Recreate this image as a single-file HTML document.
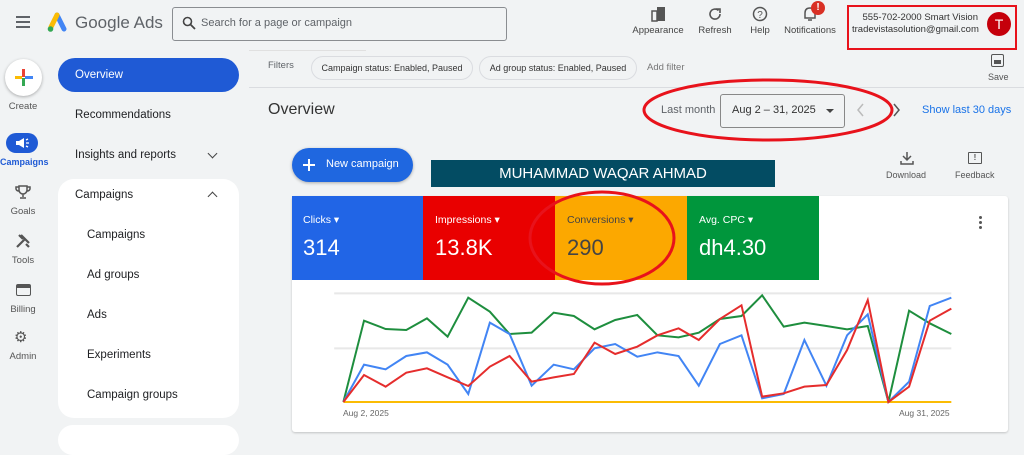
<!DOCTYPE html><html><head><style>
*{margin:0;padding:0;box-sizing:border-box}
body{width:1024px;height:440px;overflow:hidden;background:#f1f3f4;font-family:"Liberation Sans",sans-serif;position:relative;color:#3c4043}
.a{position:absolute}
.nl{font-size:11px;color:#444;text-align:center}
.side{font-size:11.5px;color:#202124}
.ic{font-size:9.5px;color:#555;text-align:center}
</style></head><body>
<!-- header -->
<div class="a" style="left:16px;top:16px;width:14px;height:2px;background:#5f6368;box-shadow:0 5px 0 #5f6368,0 10px 0 #5f6368"></div>
<svg class="a" style="left:46px;top:12px" width="22" height="22" viewBox="0 0 22 22"><path d="M11 3 L18 17" stroke="#4285f4" stroke-width="5" stroke-linecap="round"/><path d="M11 3 L5 15" stroke="#fbbc04" stroke-width="5" stroke-linecap="round"/><circle cx="4.5" cy="17" r="2.8" fill="#34a853"/></svg>
<div class="a" style="left:75px;top:13px;font-size:17px;color:#5f6368">Google Ads</div>
<div class="a" style="left:172px;top:7px;width:335px;height:34px;border:1px solid #8a8d91;border-radius:3px;background:#f1f3f4"></div>
<svg class="a" style="left:182px;top:16px" width="14" height="14" viewBox="0 0 14 14"><circle cx="5.5" cy="5.5" r="4" stroke="#444" stroke-width="1.6" fill="none"/><path d="M8.5 8.5 L13 13" stroke="#444" stroke-width="1.8"/></svg>
<div class="a" style="left:201px;top:17px;font-size:11px;color:#5f6368">Search for a page or campaign</div>
<svg class="a" style="left:651px;top:6px" width="16" height="16"><rect x="1" y="5" width="5" height="10" fill="none" stroke="#555" stroke-width="1.5"/><rect x="6" y="1" width="8" height="14" fill="#555"/></svg>
<div class="a nl" style="left:628px;top:25px;width:60px;font-size:9.5px">Appearance</div>
<svg class="a" style="left:707px;top:6px" width="16" height="16" viewBox="0 0 16 16"><path d="M13 8 A5 5 0 1 1 11.5 4.5" fill="none" stroke="#555" stroke-width="1.6"/><path d="M9 3 L13 3 L13 7" fill="none" stroke="#555" stroke-width="1.6"/></svg>
<div class="a nl" style="left:695px;top:25px;width:40px;font-size:9.5px">Refresh</div>
<svg class="a" style="left:752px;top:6px" width="16" height="16"><circle cx="8" cy="8" r="6.5" fill="none" stroke="#555" stroke-width="1.5"/><text x="8" y="12" font-size="10" text-anchor="middle" fill="#555" font-family="Liberation Sans">?</text></svg>
<div class="a nl" style="left:740px;top:25px;width:40px;font-size:9.5px">Help</div>
<svg class="a" style="left:803px;top:6px" width="14" height="16"><path d="M2 12 L2 7 Q2 2 7 2 Q12 2 12 7 L12 12 Z M5 14 L9 14" fill="none" stroke="#555" stroke-width="1.5"/></svg>
<div class="a" style="left:811px;top:1px;width:14px;height:14px;border-radius:50%;background:#d93025;color:#fff;font-size:10px;font-weight:bold;text-align:center;line-height:14px">!</div>
<div class="a nl" style="left:780px;top:25px;width:60px;font-size:9.5px">Notifications</div>
<div class="a" style="left:847px;top:5px;width:170px;height:45px;border:2px solid #e8121b"></div>
<div class="a" style="left:852px;top:12px;width:126px;text-align:right;font-size:9.5px;color:#333;line-height:12px">555-702-2000 Smart Vision<br>tradevistasolution@gmail.com</div>
<div class="a" style="left:987px;top:12px;width:24px;height:24px;border-radius:50%;background:#c5000b;color:#fff;font-size:14px;text-align:center;line-height:24px">T</div>
<!-- left nav -->
<div class="a" style="left:5px;top:59px;width:37px;height:37px;border-radius:50%;background:#fff;box-shadow:0 1px 3px rgba(0,0,0,.3)"></div>
<div class="a" style="left:22px;top:69px;width:3px;height:8px;background:#ea4335"></div>
<div class="a" style="left:22px;top:78px;width:3px;height:8px;background:#34a853"></div>
<div class="a" style="left:15px;top:76px;width:7px;height:3px;background:#fbbc04"></div>
<div class="a" style="left:25px;top:76px;width:8px;height:3px;background:#4285f4"></div>
<div class="a ic" style="left:0;top:101px;width:46px">Create</div>
<div class="a" style="left:6px;top:133px;width:32px;height:20px;border-radius:10px;background:#1f5ad5"></div>
<svg class="a" style="left:14px;top:136px" width="16" height="14" viewBox="0 0 16 14"><path d="M2 5 H5 L10 2 V12 L5 9 H2 Z" fill="#fff"/><path d="M12 4 L14 3 M12 7 H15 M12 10 L14 11" stroke="#fff" stroke-width="1.3"/></svg>
<div class="a ic" style="left:0;top:157px;width:44px;color:#1f5ad5;font-weight:bold;font-size:9px">Campaigns</div>
<svg class="a" style="left:15px;top:184px" width="16" height="16" viewBox="0 0 16 16"><path d="M4 2 H12 V6 A4 4 0 0 1 4 6 Z M4 3 H1 V5 A3 3 0 0 0 4 7 M12 3 H15 V5 A3 3 0 0 1 12 7 M8 10 V13 M5 14 H11" fill="none" stroke="#555" stroke-width="1.5"/></svg>
<div class="a ic" style="left:0;top:206px;width:46px">Goals</div>
<svg class="a" style="left:15px;top:233px" width="16" height="16" viewBox="0 0 16 16"><path d="M2 14 L10 6 M6 2 L14 10 M4 2 L8 6 M11 11 L14 14" stroke="#555" stroke-width="2.2"/></svg>
<div class="a ic" style="left:0;top:255px;width:46px">Tools</div>
<div class="a" style="left:16px;top:284px;width:15px;height:12px;border:1.5px solid #555;border-top-width:4px;border-radius:2px"></div>
<div class="a ic" style="left:0;top:304px;width:46px">Billing</div>
<div class="a" style="left:14px;top:328px;font-size:15px;color:#555">&#9881;</div>
<div class="a ic" style="left:0;top:351px;width:46px">Admin</div>
<!-- sidebar -->
<div class="a" style="left:58px;top:58px;width:181px;height:34px;border-radius:17px;background:#1f5ad5"></div>
<div class="a side" style="left:75px;top:69px;color:#fff">Overview</div>
<div class="a side" style="left:75px;top:109px">Recommendations</div>
<div class="a side" style="left:75px;top:149px">Insights and reports</div>
<div class="a" style="left:209px;top:150px;width:7px;height:7px;border-right:1.5px solid #444;border-bottom:1.5px solid #444;transform:rotate(45deg)"></div>
<div class="a" style="left:58px;top:179px;width:181px;height:239px;border-radius:16px;background:#fff"></div>
<div class="a side" style="left:75px;top:189px">Campaigns</div>
<div class="a" style="left:209px;top:193px;width:7px;height:7px;border-left:1.5px solid #444;border-top:1.5px solid #444;transform:rotate(45deg)"></div>
<div class="a side" style="left:87px;top:229px">Campaigns</div>
<div class="a side" style="left:87px;top:269px">Ad groups</div>
<div class="a side" style="left:87px;top:309px">Ads</div>
<div class="a side" style="left:87px;top:349px">Experiments</div>
<div class="a side" style="left:87px;top:389px">Campaign groups</div>
<div class="a" style="left:58px;top:425px;width:181px;height:30px;border-radius:16px;background:#fff"></div>
<!-- filters -->
<div class="a" style="left:249px;top:50px;width:117px;height:1px;background:#e0e0e0"></div>
<div class="a" style="left:249px;top:87px;width:775px;height:1px;background:#dadce0"></div>
<div class="a" style="left:268px;top:60px;font-size:9.5px;color:#5f6368">Filters</div>
<div class="a" style="left:311px;top:56px;width:162px;height:24px;border:1px solid #dadce0;border-radius:12px;font-size:9px;line-height:22px;text-align:center;color:#333;white-space:nowrap">Campaign status: Enabled, Paused</div>
<div class="a" style="left:479px;top:56px;width:158px;height:24px;border:1px solid #dadce0;border-radius:12px;font-size:9px;line-height:22px;text-align:center;color:#333;white-space:nowrap">Ad group status: Enabled, Paused</div>
<div class="a" style="left:647px;top:62px;font-size:9.5px;color:#777">Add filter</div>
<div class="a" style="left:991px;top:54px;width:13px;height:13px;border:1.5px solid #555;border-radius:2px"></div>
<div class="a" style="left:994px;top:60px;width:7px;height:4px;background:#555"></div>
<div class="a" style="left:988px;top:72px;font-size:9px;color:#555">Save</div>
<!-- overview heading -->
<div class="a" style="left:268px;top:101px;font-size:16px;color:#333">Overview</div>
<div class="a" style="left:661px;top:104px;font-size:11px;color:#5f6368">Last month</div>
<div class="a" style="left:720px;top:94px;width:125px;height:34px;border:1px solid #888;border-radius:3px"></div>
<div class="a" style="left:732px;top:104px;font-size:11px;color:#333">Aug 2 – 31, 2025</div>
<div class="a" style="left:826px;top:109px;border:4px solid transparent;border-top:4px solid #444"></div>
<svg class="a" style="left:856px;top:103px" width="10" height="14"><path d="M7 1 L2 7 L7 13" fill="none" stroke="#bbb" stroke-width="1.5"/></svg>
<svg class="a" style="left:892px;top:103px" width="10" height="14"><path d="M2 1 L7 7 L2 13" fill="none" stroke="#555" stroke-width="1.5"/></svg>
<div class="a" style="left:922px;top:104px;font-size:11px;color:#1a73e8">Show last 30 days</div>
<svg class="a" style="left:640px;top:76px" width="260" height="68"><ellipse cx="128" cy="34" rx="124" ry="30" fill="none" stroke="#e8121b" stroke-width="3"/></svg>
<!-- new campaign -->
<div class="a" style="left:292px;top:148px;width:121px;height:34px;border-radius:17px;background:#1f67e0;box-shadow:0 1px 3px rgba(0,0,0,.3)"></div>
<div class="a" style="left:303px;top:164px;width:12px;height:2px;background:#fff"></div>
<div class="a" style="left:308px;top:159px;width:2px;height:12px;background:#fff"></div>
<div class="a" style="left:326px;top:158px;font-size:11px;color:#fff">New campaign</div>
<div class="a" style="left:431px;top:160px;width:344px;height:27px;background:#034c63;color:#fff;font-size:15px;text-align:center;line-height:27px">MUHAMMAD WAQAR AHMAD</div>
<svg class="a" style="left:900px;top:151px" width="14" height="14"><path d="M7 1 V9 M3 5 L7 9 L11 5 M1 10 V13 H13 V10" fill="none" stroke="#555" stroke-width="1.5"/></svg>
<div class="a" style="left:886px;top:170px;font-size:9px;color:#555">Download</div>
<div class="a" style="left:968px;top:152px;width:14px;height:12px;border:1.5px solid #555;border-radius:1px;font-size:8px;text-align:center;line-height:9px;color:#555;font-weight:bold">!</div>
<div class="a" style="left:955px;top:170px;font-size:9px;color:#555">Feedback</div>
<!-- card -->
<div class="a" style="left:292px;top:196px;width:716px;height:236px;background:#fff;border-radius:3px;box-shadow:0 1px 2px rgba(0,0,0,.2)"></div>
<div class="a" style="left:292px;top:196px;width:131px;height:84px;background:#2165e6"></div>
<div class="a" style="left:423px;top:196px;width:132px;height:84px;background:#e90000"></div>
<div class="a" style="left:555px;top:196px;width:132px;height:84px;background:#fca800"></div>
<div class="a" style="left:687px;top:196px;width:132px;height:84px;background:#00963c"></div>
<div class="a" style="left:303px;top:214px;font-size:10.5px;color:#fff">Clicks &#9662;</div>
<div class="a" style="left:303px;top:235px;font-size:22px;color:#fff">314</div>
<div class="a" style="left:435px;top:214px;font-size:10.5px;color:#fff">Impressions &#9662;</div>
<div class="a" style="left:435px;top:235px;font-size:22px;color:#fff">13.8K</div>
<div class="a" style="left:567px;top:214px;font-size:10.5px;color:#444">Conversions &#9662;</div>
<div class="a" style="left:567px;top:235px;font-size:22px;color:#444">290</div>
<div class="a" style="left:699px;top:214px;font-size:10.5px;color:#fff">Avg. CPC &#9662;</div>
<div class="a" style="left:699px;top:235px;font-size:22px;color:#fff">dh4.30</div>
<div class="a" style="left:979px;top:216px;width:3px;height:3px;border-radius:50%;background:#555;box-shadow:0 5px 0 #555,0 10px 0 #555"></div>
<svg class="a" style="left:280px;top:190px" width="720" height="250" viewBox="0 0 1568 750" preserveAspectRatio="none">
<g fill="none" stroke-width="2">
<path d="M118 310H1462M118 475H1462" stroke="#e8e8e8" vector-effect="non-scaling-stroke"/>
<path d="M138 636H1462" stroke="#fbbc04" vector-effect="non-scaling-stroke"/>
<polyline vector-effect="non-scaling-stroke" stroke="#1e8e3e" points="138,636 183,392 230,417 275,420 320,385 365,440 410,323 457,365 500,432 548,428 596,368 640,378 685,418 730,390 778,375 822,436 868,442 912,428 958,387 1005,378 1050,316 1097,410 1142,398 1190,408 1235,418 1280,408 1325,636 1370,362 1415,400 1462,432"/>
<polyline vector-effect="non-scaling-stroke" stroke="#4285f4" points="138,636 183,524 230,538 275,498 320,487 365,524 410,612 457,398 500,432 548,587 596,524 640,538 685,475 730,462 778,500 822,487 868,498 912,587 958,462 1005,436 1050,625 1097,612 1142,450 1190,587 1235,436 1280,373 1325,636 1370,575 1415,348 1462,323"/>
<polyline vector-effect="non-scaling-stroke" stroke="#e52d2d" points="138,636 183,555 230,590 275,548 320,535 365,562 410,588 457,530 500,498 548,575 596,562 640,552 685,458 730,492 778,470 822,436 868,415 912,450 958,387 1005,346 1050,620 1097,610 1142,590 1190,585 1235,480 1280,330 1325,636 1370,590 1415,392 1462,356"/>
</g></svg>
<div class="a" style="left:343px;top:408px;font-size:8.5px;color:#666">Aug 2, 2025</div>
<div class="a" style="left:899px;top:408px;font-size:8.5px;color:#666">Aug 31, 2025</div>
<svg class="a" style="left:525px;top:188px" width="155" height="102"><ellipse cx="77" cy="50" rx="72" ry="46" fill="none" stroke="#e8121b" stroke-width="3"/></svg>
</body></html>
